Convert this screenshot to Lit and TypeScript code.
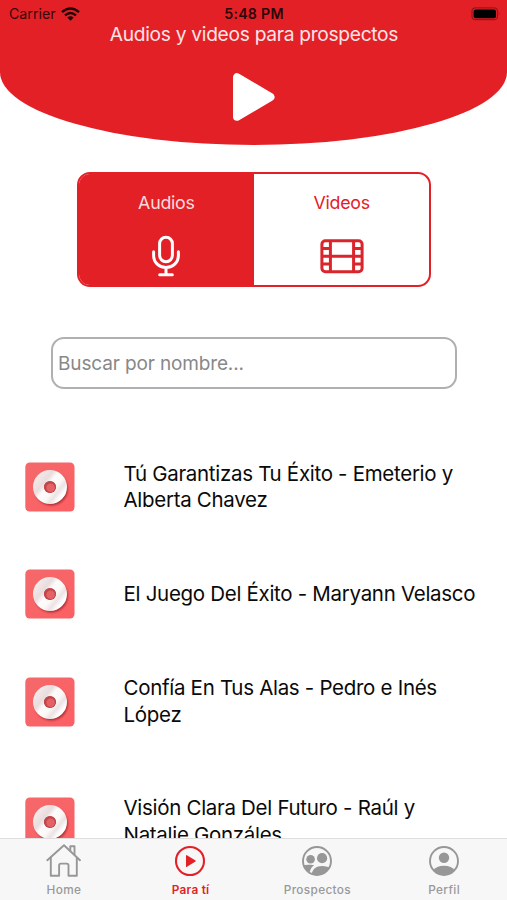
import { LitElement, html, css, svg } from "lit";
import { customElement, property } from "lit/decorators.js";

const RED = "#e42027";

@customElement("audio-row")
class AudioRow extends LitElement {
  @property() name = "";
  static styles = css`
    :host { display: flex; align-items: center; padding: 33.5px 25px; flex: none; }
    .cover { width: 50px; height: 50px; flex: none; margin: -12px 48.5px -12px 0; display: block; }
    .name { flex: 1; font-size: 20.5px; line-height: 26.8px; letter-spacing: -0.3px; color: #0a0a0a; white-space: pre; }
  `;
  render() {
    return html`
      <svg class="cover" viewBox="0 0 50 50">
        <defs>
          <linearGradient id="bg" x1="0" y1="0" x2="1" y2="1">
            <stop offset="0" stop-color="#f4696b" /><stop offset="1" stop-color="#fc5f63" />
          </linearGradient>
          <linearGradient id="disc" x1="0" y1="0.1" x2="1" y2="0.9">
            <stop offset="0" stop-color="#f2e6e7" /><stop offset="0.25" stop-color="#e9dcdd" />
            <stop offset="0.42" stop-color="#fdfbfb" /><stop offset="0.65" stop-color="#fbf8f8" />
            <stop offset="0.82" stop-color="#ece2e3" /><stop offset="1" stop-color="#fff" />
          </linearGradient>
          <filter id="soft" x="-30%" y="-30%" width="160%" height="160%"><feGaussianBlur stdDeviation="1.3" /></filter>
        </defs>
        <rect x="0.3" y="0.4" width="49.2" height="49.2" rx="4.5" fill="url(#bg)" />
        <circle cx="26.3" cy="27" r="16.4" fill="#9c2229" opacity="0.85" filter="url(#soft)" />
        <circle cx="25" cy="25" r="11.4" fill="none" stroke="url(#disc)" stroke-width="11.2" />
        <circle cx="25" cy="25" r="6.1" fill="#c0464b" />
        <circle cx="25.6" cy="25.8" r="4.2" fill="#e46265" />
      </svg>
      <div class="name">${this.name}</div>
    `;
  }
}

const homeIcon = svg`<g fill="none" stroke="#979797" stroke-width="1.9" stroke-linejoin="round" stroke-linecap="round">
  <path d="M2.300 17.200 19 2.200l16 15"/><path d="M5.800 14.600v18.200h8.300V22.400q0-1.800 1.800-1.800h5.800q1.800 0 1.800 1.800v10.400H31.800V14.600"/>
  <path d="M25.300 7.800V3.200h4.200v8.400"/></g>`;
const playIcon = svg`<circle cx="18" cy="18" r="14" fill="none" stroke="${RED}" stroke-width="2.1"/>
  <path d="M14 12.3v11.4q0 .6.5.3l9-5.6q.5-.4 0-.8l-9-5.6q-.5-.3-.5.3z" fill="${RED}"/>`;
const peopleIcon = svg`<clipPath id="ring"><circle cx="18" cy="18" r="14"/></clipPath>
  <circle cx="18" cy="18" r="14" fill="none" stroke="#979797" stroke-width="1.9"/>
  <g fill="#979797" clip-path="url(#ring)"><circle cx="11.6" cy="16.3" r="4.3"/><circle cx="23.1" cy="15.2" r="5.1"/>
  <path d="M12.4 33c.3-6.600 4.500-10.100 10.700-10.100 4.400 0 7.700 1.200 10 3.800V33z"/>
  <path d="M3 22.500c3-.8 7-1.100 12.300-.3-2.500 1.500-4 3.700-4.400 6.800L4 26z"/></g>`;
const personIcon = svg`<clipPath id="ring"><circle cx="18" cy="18" r="14"/></clipPath>
  <circle cx="18" cy="18" r="14" fill="none" stroke="#979797" stroke-width="1.9"/>
  <g fill="#979797" clip-path="url(#ring)"><circle cx="18" cy="14.8" r="5.200"/>
  <path d="M7 33v-5.400c2-3.300 6-4.900 11-4.900s9 1.600 11 4.900V33z"/></g>`;

@customElement("tab-item")
class TabItem extends LitElement {
  @property() label = "";
  @property({ type: Boolean }) active = false;
  @property({ attribute: false }) icon: unknown;
  static styles = css`
    :host { flex: 1; display: flex; flex-direction: column; align-items: center; padding-top: 4px; }
    svg { width: 36px; height: 36px; display: block; }
    .label { font-size: 11.8px; line-height: 14px; margin-top: 4px; padding-left: 1px; font-weight: 500; letter-spacing: 0.35px; color: #999; }
    .active { color: #e42027; font-weight: 600; letter-spacing: 0.25px; }
  `;
  render() {
    return html`<svg viewBox="0 0 36 36">${this.icon}</svg>
      <div class="label ${this.active ? "active" : ""}">${this.label}</div>`;
  }
}

@customElement("app-root")
class AppRoot extends LitElement {
  static styles = css`
    :host { display: flex; flex-direction: column; width: 507px; height: 900px; overflow: hidden; background: #fff;
      font-family: Inter, "Liberation Sans", sans-serif; }
    .header { height: 145px; flex: none; background: #e42027; border-radius: 0 0 50% 50% / 0 0 73px 73px;
      display: flex; flex-direction: column; align-items: center; }
    .status { width: 100%; height: 22px; padding: 5px 6px 0 9px; box-sizing: border-box; display: grid;
      grid-template-columns: 1fr auto 1fr; align-items: center; font-size: 14.2px; line-height: 17px; color: #35080a; }
    .carrier { display: flex; align-items: center; gap: 5px; }
    .time { font-weight: 600; letter-spacing: 0.25px; color: #2a0708; font-size: 14.2px; margin-right: 2px; }
    .battery { justify-self: end; display: block; }
    .title { font-size: 19.2px; letter-spacing: -0.3px; line-height: 24px; color: #fbe4e5; white-space: nowrap; padding-left: 1px; }
    .play { width: 44px; height: 50px; margin-top: 26px; display: block; }
    .segments { display: flex; align-self: center; width: 354.500px; height: 115px; box-sizing: border-box; margin: 27px 0 0 1px;
      border: 2px solid #e42027; border-radius: 13px; overflow: hidden; flex: none; }
    .segment { flex: 1; display: flex; flex-direction: column; align-items: center; font-size: 17.8px; letter-spacing: -0.25px; line-height: 22px; padding-top: 18px; color: #e42027; }
    .segment svg { width: 46px; height: 42px; margin-top: 21px; display: block; }
    .on { background: #e42027; color: #fbdcdd; }
    .search { width: 406px; height: 52px; margin: 50px 0 0 51px; box-sizing: border-box; border: 2px solid #b0b0b0; border-radius: 13px;
      display: flex; align-items: center; padding: 1px 0 0 5px; font-size: 19px; letter-spacing: -0.14px; color: #888; flex: none; }
    .list { flex: 1; min-height: 0; overflow: hidden; margin-top: 38px; display: flex; flex-direction: column; }
    .tabs { height: 62px; flex: none; box-sizing: border-box; background: #f7f7f7; border-top: 1px solid #dedede; display: flex; }
  `;
  render() {
    const names = [
      "Tú Garantizas Tu Éxito - Emeterio y\nAlberta Chavez",
      "El Juego Del Éxito - Maryann Velasco",
      "Confía En Tus Alas - Pedro e Inés\nLópez",
      "Visión Clara Del Futuro - Raúl y\nNatalie Gonzáles",
    ];
    return html`
      <div class="header">
        <div class="status">
          <div class="carrier">Carrier
            <svg width="19" height="14" viewBox="0 0 19 14" fill="none" stroke="#200405" stroke-width="2.4">
              <path d="M1 5.200Q9.500-2.400 18 5.200"/><path d="M4 8.400q5.500-4.700 11 0"/><path d="M6.300 10.600Q9.500 7.900 12.700 10.600L9.500 13.800z" fill="#200405" stroke="none"/>
            </svg>
          </div>
          <div class="time">5:48 PM</div>
          <svg class="battery" width="30" height="14" viewBox="0 0 30 14">
            <rect x="1" y="0.900" width="25.500" height="11.800" rx="3.500" fill="none" stroke="#96171b" stroke-width="1.200"/>
            <rect x="2.600" y="2.400" width="22.400" height="8.800" rx="2" fill="#000"/>
            <path d="M27.800 5q1.600 1.800 0 3.600z" fill="#96171b"/>
          </svg>
        </div>
        <div class="title">Audios y videos para prospectos</div>
        <svg class="play" viewBox="0 0 44 50"><path d="M5 5.200v39.600L38.500 25z" fill="#fff" stroke="#fff" stroke-width="8" stroke-linejoin="round"/></svg>
      </div>
      <div class="segments">
        <div class="segment on">Audios
          <svg viewBox="0 0 46 42" fill="none" stroke="#fff" stroke-width="3" stroke-linecap="round">
            <rect x="16.600" y="2.200" width="12.800" height="24.500" rx="6.400"/>
            <path d="M10.600 16.700v3.500c0 7 5 12.200 12.400 12.200S35.400 27.200 35.400 20.200v-3.500M23 32.400v7.200M16.700 39.800h12.600"/>
          </svg>
        </div>
        <div class="segment">Videos
          <svg viewBox="0 0 46 42" fill="none" stroke="#d9252b" stroke-width="3">
            <rect x="2.900" y="5.700" width="40.200" height="31" rx="3.500"/>
            <path d="M11.400 5.500v31.500M34.600 5.500v31.500M11 21.200h24M3 13.400h8M3 21.200h8M3 29h8M35 13.400h8M35 21.200h8M35 29h8"/>
          </svg>
        </div>
      </div>
      <div class="search">Buscar por nombre...</div>
      <div class="list">${names.map((n) => html`<audio-row .name=${n}></audio-row>`)}</div>
      <div class="tabs">
        <tab-item label="Home" .icon=${homeIcon}></tab-item>
        <tab-item label="Para tí" active .icon=${playIcon}></tab-item>
        <tab-item label="Prospectos" .icon=${peopleIcon}></tab-item>
        <tab-item label="Perfil" .icon=${personIcon}></tab-item>
      </div>
    `;
  }
}
